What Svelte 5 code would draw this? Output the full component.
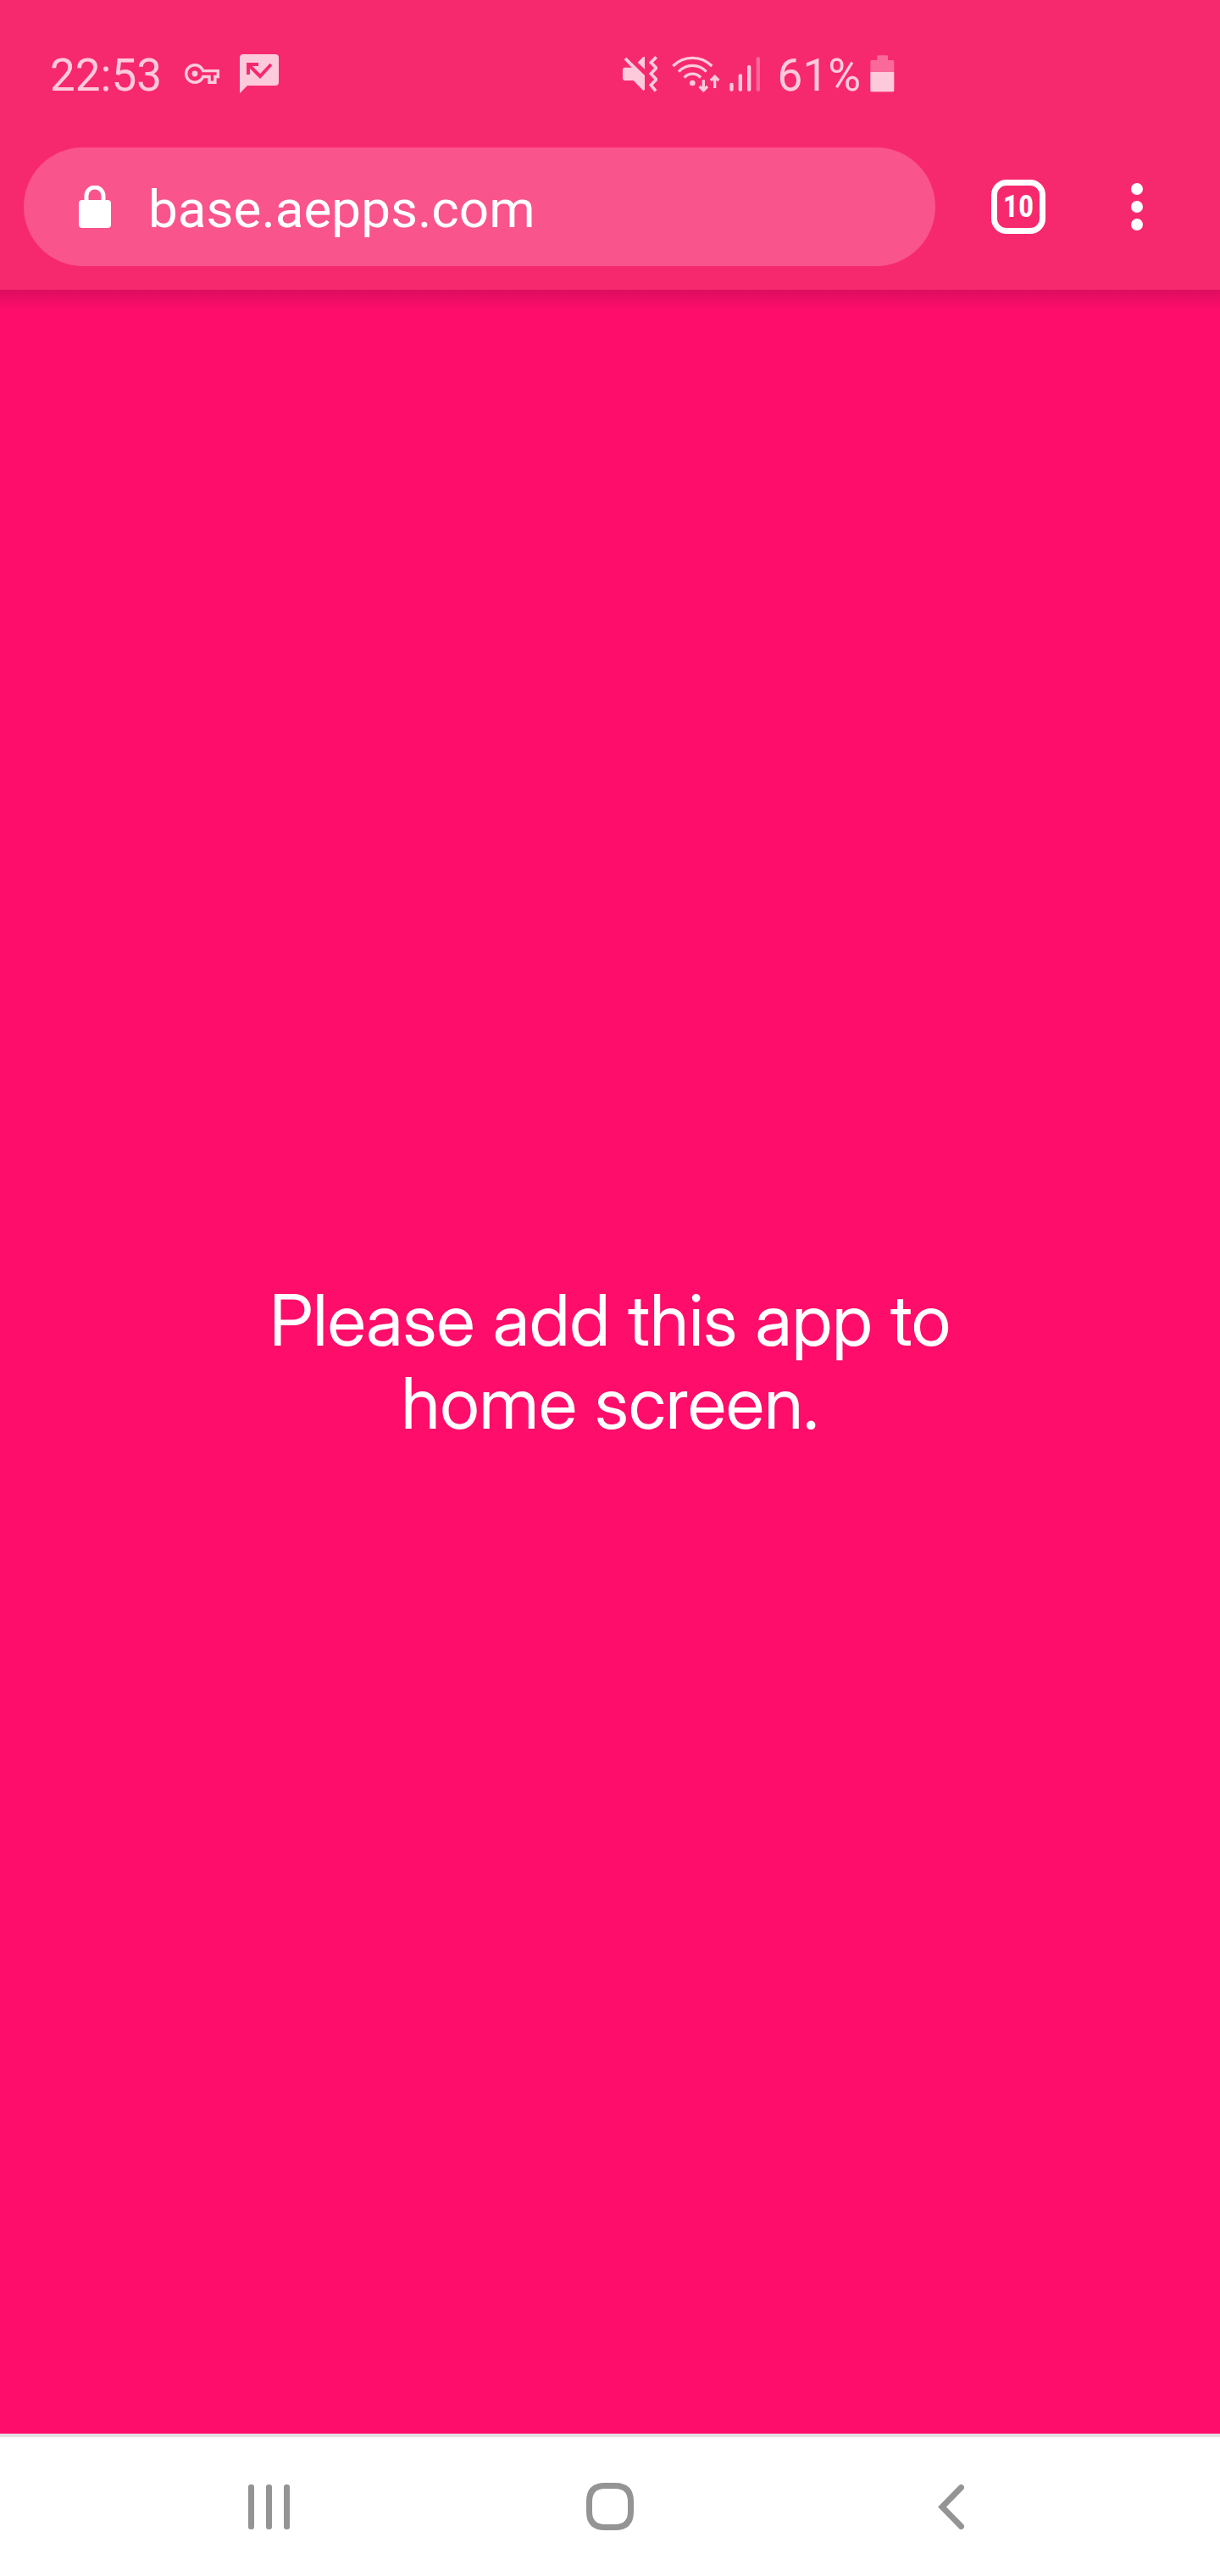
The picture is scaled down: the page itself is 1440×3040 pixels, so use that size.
<script>
  let address = $state('base.aepps.com');
  const time = '22:53';
  const battery = 61;
  const openTabs = 10;
</script>

<svelte:head>
  <title>Base æpp</title>
</svelte:head>

<div class="screen">
  <header class="chrome">
    <div class="status">
      <div class="group left">
        <time>{time}</time>
        <svg class="key" width="41" height="24" viewBox="0 5 24 14" aria-hidden="true">
          <path d="M22 19h-6v-4h-2.68c-1.14 2.42-3.6 4-6.32 4-3.86 0-7-3.14-7-7s3.14-7 7-7c2.72 0 5.17 1.58 6.32 4H24v6h-2v4zm-4-2h2v-4h2v-2H11.94l-.23-.67C11.01 8.34 9.11 7 7 7c-2.76 0-5 2.24-5 5s2.24 5 5 5c2.11 0 4.01-1.34 4.71-3.33l.23-.67H18v4z" />
          <circle cx="7" cy="12" r="2" />
        </svg>
        <svg width="46" height="46" viewBox="0 0 46 46" aria-hidden="true">
          <path d="M4 0H42Q46 0 46 4V33Q46 37 42 37H9L0 46V4Q0 0 4 0Z" />
          <path class="cut" d="M22 12H10V24M10 12L24 26L37 12" />
        </svg>
      </div>

      <div class="group right">
        <svg width="42" height="43" viewBox="45 45 126 129" aria-hidden="true">
          <path d="M61 50L126 114V164L121 168L86 132H53L48 127V91L53 86H80L53 58Z" />
          <path d="M126 48V92L101 68L121 48Z" />
          <path class="line" stroke-width="11" d="M167 49L148 68L167 88L148 108L167 128L148 148L165 169" />
        </svg>
        <svg class="wifi" width="57" height="43" viewBox="222 44 171 129" aria-hidden="true">
          <path class="line" stroke-width="10" d="M226 80A97 97 0 0 1 364 80M246 100A66 66 0 0 1 344 100M266 121A38 38 0 0 1 324 121" />
          <circle cx="295" cy="140" r="10" />
          <path class="line" stroke-width="10" d="M334 129V165M320 152L334 166L348 152M374 158V120M360 131L374 117L388 131" />
        </svg>
        <svg class="signal" width="37" height="41" viewBox="426 52 111 123" aria-hidden="true">
          <rect x="427" y="144" width="13" height="30" rx="6" />
          <rect x="458" y="113" width="13" height="61" rx="6" />
          <rect x="489" y="82" width="13" height="92" rx="6" />
          <rect class="dim" x="521" y="53" width="13" height="121" rx="6" />
        </svg>
        <span>{battery}%</span>
        <svg width="29" height="44" viewBox="920 44 87 132" aria-hidden="true">
          <path class="dim" d="M945 49Q945 45 949 45H979Q983 45 983 49V62H1000Q1005 62 1005 67V104H921V67Q921 62 926 62H945Z" />
          <path d="M921 104H1005V169Q1005 174 1000 174H926Q921 174 921 169Z" />
        </svg>
      </div>
    </div>

    <div class="toolbar">
      <label class="omnibox">
        <svg width="38" height="50" viewBox="0 0 38 50" aria-hidden="true">
          <rect x="0" y="17" width="38" height="33" rx="4" />
          <path class="line" stroke-width="5" d="M9 18V12A10 10 0 0 1 29 12V18" />
        </svg>
        <input type="text" aria-label="Web address" bind:value={address} />
      </label>
      <button class="tabs" type="button" aria-label="{openTabs} open tabs">{openTabs}</button>
      <button class="menu" type="button" aria-label="More options">
        <svg width="14" height="56" viewBox="0 0 14 56" aria-hidden="true">
          <circle cx="7" cy="7" r="7" />
          <circle cx="7" cy="28" r="7" />
          <circle cx="7" cy="49" r="7" />
        </svg>
      </button>
    </div>
  </header>

  <main>
    <p>Please add this app to home screen.</p>
  </main>

  <nav aria-label="System navigation">
    <button type="button" aria-label="Recent apps">
      <svg width="49" height="53" viewBox="0 0 49 53" aria-hidden="true">
        <rect x="0" y="0" width="7" height="53" rx="3" />
        <rect x="21" y="0" width="7" height="53" rx="3" />
        <rect x="42" y="0" width="7" height="53" rx="3" />
      </svg>
    </button>
    <button type="button" aria-label="Home">
      <svg width="56" height="56" viewBox="0 0 56 56" aria-hidden="true">
        <path class="line" stroke-width="7" d="M22 3.5H34Q52.500 3.500 52.500 22V34Q52.500 52.500 34 52.500H22Q3.500 52.500 3.500 34V22Q3.500 3.500 22 3.500Z" />
      </svg>
    </button>
    <button type="button" aria-label="Back">
      <svg width="31" height="53" viewBox="0 0 31 53" aria-hidden="true">
        <path class="line" stroke-width="7" stroke-linecap="round" d="M27.500 3.500L5 26.500L27.500 49.500" />
      </svg>
    </button>
  </nav>
</div>

<style>
  :global(body) {
    margin: 0;
    background: #ff0d6a;
  }

  .screen {
    display: flex;
    flex-direction: column;
    min-height: 100vh;
    font-family: Roboto, 'Liberation Sans', sans-serif;
    color: #fff;
  }

  svg {
    display: block;
    flex: none;
    fill: currentColor;
  }

  .line {
    fill: none;
    stroke: currentColor;
  }

  .dim {
    opacity: 0.4;
  }

  button {
    display: flex;
    align-items: center;
    justify-content: center;
    margin: 0;
    padding: 0;
    border: 0;
    background: none;
    color: inherit;
    font: inherit;
    cursor: pointer;
  }

  .chrome {
    background: #f7296e;
  }

  .status {
    display: flex;
    align-items: center;
    justify-content: space-between;
    height: 174px;
    padding: 0 384px 0 59px;
    box-sizing: border-box;
    color: #fdcadb;
    font-size: 53px;
    line-height: 64px;
  }

  .status time,
  .status span {
    padding-top: 4px;
  }

  .group {
    display: flex;
    align-items: center;
  }

  .left {
    gap: 24px;
  }

  .key {
    margin-left: 3px;
  }

  .cut {
    fill: none;
    stroke: #f7296e;
    stroke-width: 4;
  }

  .right {
    gap: 11px;
  }

  .wifi {
    margin-left: 6px;
  }

  .signal {
    margin-right: 9px;
  }

  .toolbar {
    display: flex;
    align-items: center;
    padding: 0 54px 28px 28px;
  }

  .omnibox {
    display: flex;
    flex: 1;
    align-items: center;
    gap: 44px;
    height: 140px;
    padding: 0 65px;
    border-radius: 70px;
    background: #f9548b;
    box-sizing: border-box;
  }

  .omnibox input {
    flex: 1;
    min-width: 0;
    padding: 6px 0 0;
    border: 0;
    outline: 0;
    background: none;
    color: #fff;
    font: inherit;
    font-size: 62px;
    line-height: 74px;
  }

  .tabs {
    width: 64px;
    height: 64px;
    margin: 0 64px 0 66px;
    border: 7px solid #fff;
    border-radius: 18px;
    box-sizing: border-box;
    font-family: 'Roboto Condensed', Roboto, sans-serif;
    font-size: 36px;
    font-weight: 700;
    line-height: 40px;
  }

  .menu {
    width: 88px;
    height: 88px;
  }

  main {
    display: flex;
    flex: 1;
    align-items: center;
    justify-content: center;
    background: linear-gradient(#dd0d5e, #ff0d6a 24px);
  }

  p {
    max-width: 900px;
    margin: 0;
    font-family: 'Inter Display', Inter, sans-serif;
    font-size: 84px;
    line-height: 98px;
    text-align: center;
  }

  nav {
    display: flex;
    height: 164px;
    padding: 0 116px;
    border-top: 4px solid #e3dfe1;
    background: #fff;
    color: #949494;
  }

  nav button {
    flex: 1;
  }
</style>
